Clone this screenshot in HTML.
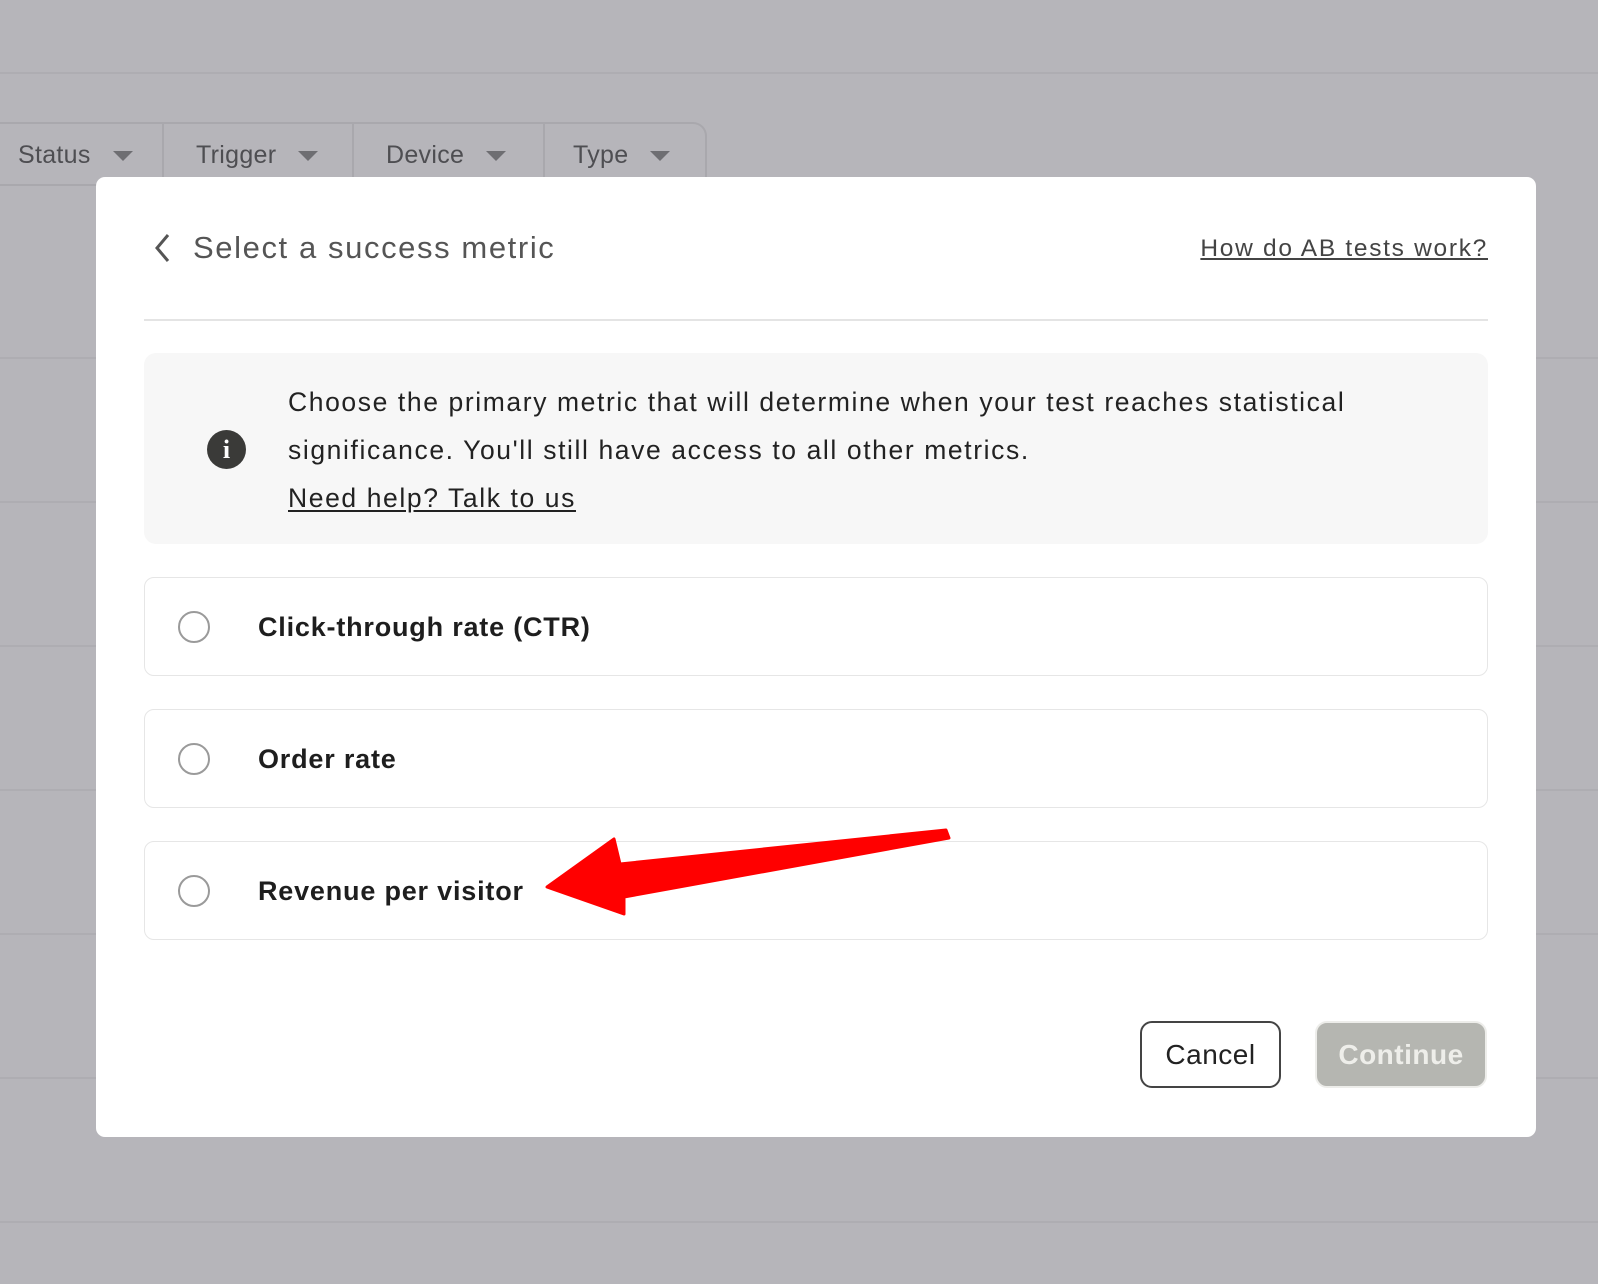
<!DOCTYPE html>
<html><head><meta charset="utf-8"><style>
*{box-sizing:border-box;margin:0;padding:0}
body{width:1598px;height:1284px;background:#b6b5ba;position:relative;overflow:hidden;font-family:"Liberation Sans",sans-serif}
.hl{position:absolute;left:0;width:1598px;height:2px;background:#aeadb2}
.tabs{position:absolute;left:-4px;top:122px;width:711px;height:64px;border:2px solid #a9a8ad;border-left:none;border-radius:0 14px 0 0}
.tab{position:absolute;top:0;height:62px;border-right:2px solid #a9a8ad;font-size:25px;color:#4e4e52;line-height:62px;letter-spacing:.3px}
.tab i{display:inline-block;width:0;height:0;border-left:10px solid transparent;border-right:10px solid transparent;border-top:10px solid #6e6e72;margin-left:22px;vertical-align:middle}
.modal{position:absolute;left:96px;top:177px;width:1440px;height:960px;background:#fff;border-radius:9px}
.title{position:absolute;left:97px;top:53px;font-size:31px;color:#555;letter-spacing:1.6px}
.link{position:absolute;right:48px;top:58px;font-size:24.5px;color:#444;text-decoration:underline;letter-spacing:1.7px}
.div{position:absolute;left:48px;top:142px;width:1344px;height:2px;background:#e4e4e4}
.info{position:absolute;left:48px;top:176px;width:1344px;height:191px;background:#f7f7f7;border-radius:12px}
.ic{position:absolute;left:63px;top:77px;width:39px;height:39px;border-radius:50%;background:#3a3a38;color:#fff;font:bold 26px/39px "Liberation Serif",serif;text-align:center}
.it{position:absolute;left:144px;top:25px;font-size:26.5px;line-height:48px;color:#222;letter-spacing:1.6px}
.it u{text-underline-offset:3px}
.opt{position:absolute;left:48px;width:1344px;height:99px;border:1.5px solid #e6e6e6;border-radius:10px}
.opt .r{position:absolute;left:33px;top:33px;width:32px;height:32px;border:2px solid #9a9a9a;border-radius:50%}
.opt b{position:absolute;left:113px;top:1px;line-height:97px;font-size:27px;color:#1e1e1e;letter-spacing:.8px}
.btn{position:absolute;top:844px;height:67px;border-radius:12px;font-size:28px;text-align:center;line-height:63px;letter-spacing:.5px}
</style></head><body>
<div class="hl" style="top:72px"></div>
<div class="hl" style="top:357px"></div>
<div class="hl" style="top:501px"></div>
<div class="hl" style="top:645px"></div>
<div class="hl" style="top:789px"></div>
<div class="hl" style="top:933px"></div>
<div class="hl" style="top:1077px"></div>
<div class="hl" style="top:1221px"></div>
<div class="tabs">
<div class="tab" style="left:0;width:168px;padding-left:22px">Status<i></i></div>
<div class="tab" style="left:168px;width:190px;padding-left:32px">Trigger<i></i></div>
<div class="tab" style="left:358px;width:191px;padding-left:32px">Device<i></i></div>
<div class="tab" style="left:549px;width:160px;padding-left:28px;border-right:none">Type<i></i></div>
</div>
<div class="modal">
<svg style="position:absolute;left:56px;top:55px" width="20" height="32" viewBox="0 0 20 32"><path d="M16 3 L5 16 L16 29" fill="none" stroke="#555" stroke-width="3"/></svg>
<div class="title">Select a success metric</div>
<div class="link">How do AB tests work?</div>
<div class="div"></div>
<div class="info"><div class="ic">i</div><div class="it">Choose the primary metric that will determine when your test reaches statistical<br>significance. You'll still have access to all other metrics.<br><u>Need help? Talk to us</u></div></div>
<div class="opt" style="top:400px"><div class="r"></div><b>Click-through rate (CTR)</b></div>
<div class="opt" style="top:532px"><div class="r"></div><b>Order rate</b></div>
<div class="opt" style="top:664px"><div class="r"></div><b>Revenue per visitor</b></div>
<div class="btn" style="left:1044px;width:141px;border:2px solid #444;color:#222">Cancel</div>
<div class="btn" style="left:1219px;width:172px;background:#b5b6b1;border:2px solid #ededea;color:#eeeeea;font-weight:bold">Continue</div>
</div>
<svg style="position:absolute;left:0;top:0" width="1598" height="1284"><polygon points="547,887 614,839 620,864 946,830 949,838 624,897 624,914" fill="#ff0000" stroke="#ff0000" stroke-width="3" stroke-linejoin="round"/></svg>
</body></html>
